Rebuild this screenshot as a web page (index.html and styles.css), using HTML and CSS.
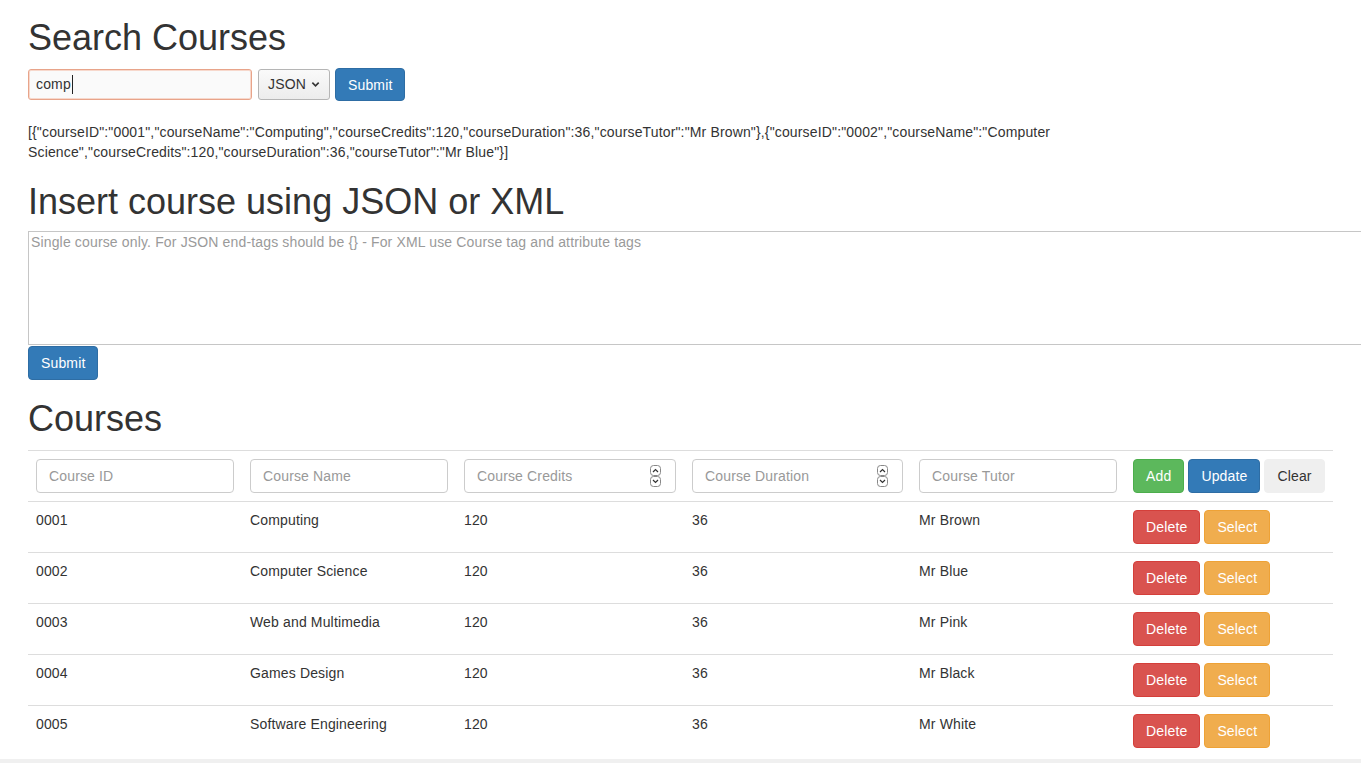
FILE: index.html
```html
<!DOCTYPE html>
<html>
<head>
<meta charset="utf-8">
<link rel="stylesheet" href="styles.css">
</head>
<body>
<div class="page">
  <h1 class="title">Search Courses</h1>
  <div class="search-row">
    <div class="search-input"><span>comp</span><span class="caret"></span></div>
    <div class="select">JSON <svg width="10" height="7" viewBox="0 0 10 7"><path d="M1.5 1.5 L5 5 L8.5 1.5" fill="none" stroke="#333" stroke-width="1.8"/></svg></div>
    <button class="btn btn-primary">Submit</button>
  </div>
  <p class="result">[{"courseID":"0001","courseName":"Computing","courseCredits":120,"courseDuration":36,"courseTutor":"Mr Brown"},{"courseID":"0002","courseName":"Computer Science","courseCredits":120,"courseDuration":36,"courseTutor":"Mr Blue"}]</p>
  <h2 class="title">Insert course using JSON or XML</h2>
  <div class="area-wrap"><textarea class="area" placeholder="Single course only. For JSON end-tags should be {} - For XML use Course tag and attribute tags"></textarea></div>
  <button class="btn btn-primary">Submit</button>
  <h1 class="title courses">Courses</h1>
  <table class="tbl">
    <colgroup>
      <col style="width:214px"><col style="width:214px"><col style="width:228px"><col style="width:227px"><col style="width:214px"><col style="width:208px">
    </colgroup>
    <tr>
      <td><div class="field">Course ID</div></td>
      <td><div class="field">Course Name</div></td>
      <td><div class="field num">Course Credits<span class="spin"><svg width="11" height="24" viewBox="0 0 11 24"><rect x="0.5" y="1.5" width="10" height="10" rx="3" fill="#fff" stroke="#888"/><path d="M3 8 L5.5 5.5 L8 8" fill="none" stroke="#333" stroke-width="1.2"/><rect x="0.5" y="12.5" width="10" height="10" rx="3" fill="#fff" stroke="#888"/><path d="M3 16 L5.5 18.5 L8 16" fill="none" stroke="#333" stroke-width="1.2"/></svg></span></div></td>
      <td><div class="field num">Course Duration<span class="spin"><svg width="11" height="24" viewBox="0 0 11 24"><rect x="0.5" y="1.5" width="10" height="10" rx="3" fill="#fff" stroke="#888"/><path d="M3 8 L5.5 5.5 L8 8" fill="none" stroke="#333" stroke-width="1.2"/><rect x="0.5" y="12.5" width="10" height="10" rx="3" fill="#fff" stroke="#888"/><path d="M3 16 L5.5 18.5 L8 16" fill="none" stroke="#333" stroke-width="1.2"/></svg></span></div></td>
      <td><div class="field">Course Tutor</div></td>
      <td class="actions"><button class="btn btn-success">Add</button><button class="btn btn-primary">Update</button><button class="btn btn-light">Clear</button></td>
    </tr>
    <tr><td>0001</td><td>Computing</td><td>120</td><td>36</td><td>Mr Brown</td><td class="actions"><button class="btn btn-danger">Delete</button><button class="btn btn-warning">Select</button></td></tr>
    <tr><td>0002</td><td>Computer Science</td><td>120</td><td>36</td><td>Mr Blue</td><td class="actions"><button class="btn btn-danger">Delete</button><button class="btn btn-warning">Select</button></td></tr>
    <tr><td>0003</td><td>Web and Multimedia</td><td>120</td><td>36</td><td>Mr Pink</td><td class="actions"><button class="btn btn-danger">Delete</button><button class="btn btn-warning">Select</button></td></tr>
    <tr><td>0004</td><td>Games Design</td><td>120</td><td>36</td><td>Mr Black</td><td class="actions"><button class="btn btn-danger">Delete</button><button class="btn btn-warning">Select</button></td></tr>
    <tr><td>0005</td><td>Software Engineering</td><td>120</td><td>36</td><td>Mr White</td><td class="actions"><button class="btn btn-danger">Delete</button><button class="btn btn-warning">Select</button></td></tr>
  </table>
</div>
<div class="scroll-strip"></div>
</body>
</html>
```
FILE: styles.css
```css
html, body {
  margin: 0;
  overflow: hidden;
}
body {
  font-family: "Liberation Sans", Arial, sans-serif;
  font-size: 14px;
  line-height: 20px;
  letter-spacing: 0.15px;
  color: #333;
  background: #fff;
}
.page {
  padding-left: 28px;
}
.title {
  font-size: 36px;
  font-weight: normal;
  line-height: 39.6px;
  letter-spacing: 0;
  margin: 18px 0 10px;
}
h2.title {
  margin-top: 20px;
}
.courses {
  margin-top: 19px;
  margin-bottom: 11px;
}
.search-row {
  display: flex;
  align-items: center;
  gap: 6px;
  height: 34px;
}
.search-input {
  width: 224px;
  height: 31px;
  box-sizing: border-box;
  border: 1px solid #e8a48a;
  border-radius: 3px;
  background: #fafafa;
  padding: 0 7px;
  display: flex;
  align-items: center;
  box-shadow: inset 0 0 0 1px #f7d8cc;
  margin-top: -1px;
}
.caret {
  display: inline-block;
  width: 1px;
  height: 19px;
  background: #222;
  margin-left: 1px;
}
.select {
  width: 72px;
  height: 31px;
  box-sizing: border-box;
  border: 1px solid #b5b5b5;
  border-radius: 3px;
  background: linear-gradient(#fafafa, #ececec);
  padding: 0 9px;
  display: flex;
  align-items: center;
  gap: 5px;
  margin-top: -1px;
}
.btn {
  font-family: "Liberation Sans", Arial, sans-serif;
  font-size: 14px;
  line-height: 20px;
  letter-spacing: 0.15px;
  padding: 6px 12px;
  border: 1px solid transparent;
  border-radius: 4px;
  color: #fff;
  cursor: pointer;
  height: 34px;
}
.search-row .btn {
  margin-left: -1px;
  height: 33px;
}
.btn-primary { background: #337ab7; border-color: #2e6da4; }
.btn-success { background: #5cb85c; border-color: #4cae4c; }
.btn-danger { background: #d9534f; border-color: #d43f3a; }
.btn-warning { background: #f0ad4e; border-color: #eea236; }
.btn-light { background: #efefef; border-color: #efefef; color: #333; }
.result {
  margin: 20px 0 0;
  width: 1060px;
}
.area-wrap {
  overflow: hidden;
  height: 115px;
}
.area {
  display: block;
  width: 1400px;
  height: 114px;
  box-sizing: border-box;
  border: 1px solid #c6c6c6;
  padding: 0 2px;
  font-family: "Liberation Sans", Arial, sans-serif;
  font-size: 14px;
  line-height: 20px;
  letter-spacing: 0.15px;
  resize: none;
  margin: 0;
}
.area::placeholder {
  color: #9a9a9a;
}
.tbl {
  border-collapse: collapse;
  table-layout: fixed;
  width: 1305px;
  margin-top: 0;
}
.tbl td {
  border-top: 1px solid #ddd;
  padding: 8px;
  vertical-align: top;
  height: 34px;
}
.field {
  height: 34px;
  box-sizing: border-box;
  border: 1px solid #ccc;
  border-radius: 4px;
  padding: 6px 12px;
  color: #999;
  position: relative;
}
.spin {
  position: absolute;
  right: 14px;
  top: 4px;
  line-height: 0;
}
.actions {
  display: flex;
  gap: 4px;
}
.actions .btn {
  flex: none;
}
.scroll-strip {
  height: 6px;
  margin-top: 3px;
  background: #f0f0f0;
}
```
